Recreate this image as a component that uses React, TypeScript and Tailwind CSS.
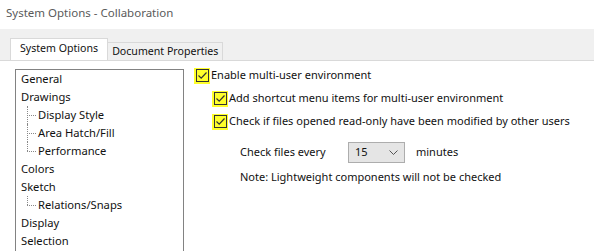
import React from 'react';

const font = { fontFamily: '"Noto Sans", "Open Sans", sans-serif' };

interface TreeItem {
    label: string;
    child?: boolean;
    last?: boolean;
}

const treeItems: TreeItem[] = [
    { label: 'General' },
    { label: 'Drawings' },
    { label: 'Display Style', child: true },
    { label: 'Area Hatch/Fill', child: true },
    { label: 'Performance', child: true, last: true },
    { label: 'Colors' },
    { label: 'Sketch' },
    { label: 'Relations/Snaps', child: true, last: true },
    { label: 'Display' },
    { label: 'Selection' },
];

const CheckBox: React.FC = () => (
    <span className="flex h-[16px] w-[16px] flex-shrink-0 items-center justify-center bg-[#ffff2a]">
        <span className="flex h-[13px] w-[13px] items-center justify-center border border-[#333333]">
            <svg width="11" height="11" viewBox="0 0 11 11">
                <path d="M1.5 5.5 L4.2 8.2 L9.5 2.5" fill="none" stroke="#333" strokeWidth="1.2" />
            </svg>
        </span>
    </span>
);

const App: React.FC = () => {
    return (
        <div className="h-[251px] w-[594px] overflow-hidden whitespace-nowrap bg-white text-[11px] text-[#111]" style={font}>
            <div className="h-[29px] pl-[6px] pt-[4px] text-[11.5px] text-[#5a5a5a]">System Options - Collaboration</div>
            <div className="flex h-[32px] items-end border-b border-[#d9d9d9] bg-[#f0f0f0] pl-[10px]">
                <div className="h-[22px] border border-b-0 border-[#d9d9d9] bg-white px-[9px] pt-[2px] text-[10.6px]">System Options</div>
                <div className="h-[18px] border border-b-0 border-l-0 border-[#d9d9d9] bg-[#f0f0f0] px-[4px] text-[10.6px] leading-[17px]">Document Properties</div>
            </div>
            <div className="flex pl-[15px] pt-[8px]">
                <div className="h-[200px] w-[169px] flex-shrink-0 border border-[#828282] pl-[5px]">
                    {treeItems.map((item) => (
                        <div key={item.label} className="relative flex h-[18px] items-center text-[11.2px]">
                            {item.child && (
                                <span className="relative mr-[2px] flex h-full w-[15px] items-center pl-[6px]">
                                    <span
                                        className={`absolute left-[6px] top-0 w-0 border-l border-dotted border-[#888] ${item.last ? 'h-[9px]' : 'h-full'}`}
                                    />
                                    <span className="w-[9px] border-t border-dotted border-[#888]" />
                                </span>
                            )}
                            <span>{item.label}</span>
                        </div>
                    ))}
                </div>
                <div className="flex flex-col pl-[10px]">
                    <div className="-mt-[2px] flex h-[17px] items-center gap-[1px]">
                        <CheckBox />
                        <span>Enable multi-user environment</span>
                    </div>
                    <div className="ml-[18px] mt-[6px] flex h-[17px] items-center gap-[1px]">
                        <CheckBox />
                        <span>Add shortcut menu items for multi-user environment</span>
                    </div>
                    <div className="ml-[18px] mt-[6px] flex h-[17px] items-center gap-[1px]">
                        <CheckBox />
                        <span>Check if files opened read-only have been modified by other users</span>
                    </div>
                    <div className="ml-[46px] mt-[12px] flex items-center">
                        <span className="w-[108px]">Check files every</span>
                        <div className="flex h-[21px] w-[57px] items-center justify-between border border-[#adadad] bg-[#e5e5e5] pl-[6px] pr-[6px]">
                            <span>15</span>
                            <svg width="9" height="6" viewBox="0 0 9 6">
                                <path d="M0.5 0.5 L4.5 4.5 L8.5 0.5" fill="none" stroke="#555" strokeWidth="1" />
                            </svg>
                        </div>
                        <span className="ml-[11px]">minutes</span>
                    </div>
                    <div className="ml-[46px] mt-[6px]">Note: Lightweight components will not be checked</div>
                </div>
            </div>
        </div>
    );
};

export default App;
